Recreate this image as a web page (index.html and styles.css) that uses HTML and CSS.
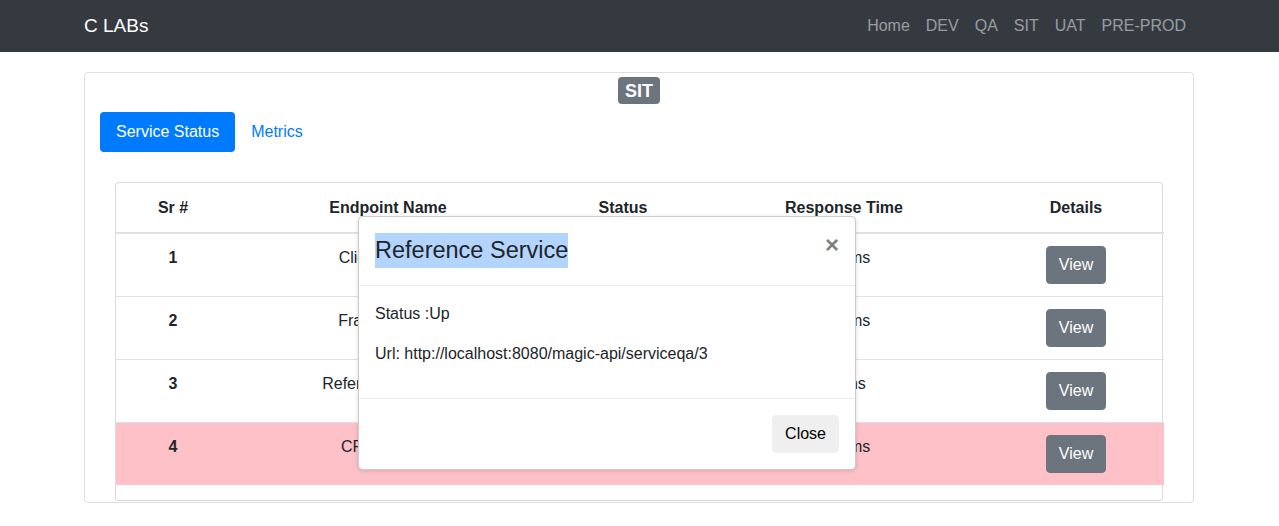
FILE: index.html
```html
<!DOCTYPE html>
<html lang="en">
<head>
<meta charset="utf-8">
<title>C LABs</title>
<link rel="stylesheet" href="styles.css">
</head>
<body>
<nav class="navbar">
  <div class="container nav-inner">
    <a class="brand" href="#">C LABs</a>
    <ul class="nav-links">
      <li><a href="#">Home</a></li>
      <li><a href="#">DEV</a></li>
      <li><a href="#">QA</a></li>
      <li><a href="#">SIT</a></li>
      <li><a href="#">UAT</a></li>
      <li><a href="#">PRE-PROD</a></li>
    </ul>
  </div>
</nav>
<main class="container">
  <div class="card">
    <div class="env-title"><span class="badge">SIT</span></div>
    <div class="pills">
      <a class="pill active" href="#">Service Status</a>
      <a class="pill" href="#">Metrics</a>
    </div>
    <div class="table-wrap">
      <table class="status-table">
        <thead>
          <tr>
            <th class="c1">Sr #</th>
            <th class="c2">Endpoint Name</th>
            <th class="c3">Status</th>
            <th class="c4">Response Time</th>
            <th class="c5">Details</th>
          </tr>
        </thead>
        <tbody>
          <tr>
            <th>1</th><td>Client Service</td><td>Up</td><td>123 ms</td><td><button class="btn-view">View</button></td>
          </tr>
          <tr>
            <th>2</th><td>Fraud Service</td><td>Up</td><td>145 ms</td><td><button class="btn-view">View</button></td>
          </tr>
          <tr>
            <th>3</th><td>Reference Service</td><td>Up</td><td>98 ms</td><td><button class="btn-view">View</button></td>
          </tr>
          <tr class="row-danger">
            <th>4</th><td>CRM Service</td><td>Down</td><td>510 ms</td><td><button class="btn-view">View</button></td>
          </tr>
        </tbody>
      </table>
    </div>
  </div>
</main>
<div class="modal">
  <div class="modal-header">
    <h4 class="modal-title"><span class="sel">Reference Service</span></h4>
    <button class="close" aria-label="Close">×</button>
  </div>
  <div class="modal-body">
    <p>Status :Up</p>
    <p>Url: http://localhost:8080/magic-api/serviceqa/3</p>
  </div>
  <div class="modal-footer">
    <button class="btn-close">Close</button>
  </div>
</div>
</body>
</html>
```
FILE: styles.css
```css
* { box-sizing: border-box; }
html, body {
  margin: 0;
  padding: 0;
  font-family: "Liberation Sans", Arial, sans-serif;
  font-size: 16px;
  line-height: 1.5;
  color: #212529;
  background: #fff;
}
.container {
  max-width: 1140px;
  margin: 0 auto;
  padding: 0 15.5px 0 14.5px;
}
.navbar {
  background: #343a40;
  height: 52px;
}
.nav-inner {
  height: 52px;
  display: flex;
  align-items: center;
  justify-content: space-between;
}
.brand {
  color: #fff;
  font-size: 19px;
  text-decoration: none;
  line-height: 30px;
}
.nav-links {
  display: flex;
  list-style: none;
  margin: 0;
  padding: 0;
}
.nav-links a {
  display: block;
  padding: 8px 8px;
  color: rgba(255,255,255,.5);
  text-decoration: none;
  line-height: 24px;
}
.card {
  margin-top: 20px;
  border: 1px solid rgba(0,0,0,.125);
  border-radius: 4px;
  padding: 4px 15px 1px;
}
.env-title {
  display: flex;
  justify-content: center;
  margin-bottom: 8px;
}
.badge {
  display: inline-block;
  background: #6c757d;
  color: #fff;
  font-weight: 700;
  font-size: 18px;
  line-height: 1;
  padding: 4.5px 7.2px;
  border-radius: 4px;
}
.pills {
  display: flex;
  margin-bottom: 30px;
}
.pill {
  display: block;
  padding: 8px 16px;
  line-height: 24px;
  color: #007bff;
  text-decoration: none;
  border-radius: 4px;
}
.pill.active {
  background: #007bff;
  color: #fff;
}
.table-wrap {
  margin: 0 15px;
  border: 1px solid #dcdcdc;
  border-bottom-color: #d6d6d6;
  border-radius: 4px;
  padding-bottom: 15px;
}
.status-table {
  width: 100%;
  border-collapse: collapse;
  table-layout: fixed;
}
.status-table th, .status-table td {
  padding: 13px 12px 12px;
  text-align: center;
  vertical-align: top;
  line-height: 24px;
}
.status-table thead th {
  border-bottom: 2px solid #dee2e6;
  font-weight: 700;
}
.status-table tbody td, .status-table tbody th { padding-top: 12px; }
.status-table tbody tr { border-top: 1px solid #dee2e6; }
.status-table tbody tr:first-child { border-top: 0; }
.status-table tbody th { font-weight: 700; }
.c1 { width: 114px; }
.c2 { width: 316px; }
.c3 { width: 154px; }
.c4 { width: 288px; }
.c5 { width: 176px; }
.row-danger { background: #fdc1c7; }
.btn-view {
  font-family: inherit;
  font-size: 16px;
  line-height: 24px;
  padding: 6px 12px;
  color: #fff;
  background: #6c757d;
  border: 1px solid #6c757d;
  border-radius: 4px;
}
.modal {
  position: absolute;
  left: 358px;
  top: 216px;
  width: 498px;
  background: #fff;
  border: 1px solid rgba(0,0,0,.2);
  border-radius: 5px;
  box-shadow: 0 1px 4px rgba(0,0,0,.15);
}
.modal-header {
  display: flex;
  align-items: flex-start;
  justify-content: space-between;
  padding: 16px;
  border-bottom: 1px solid #e9ecef;
}
.modal-title {
  margin: 0;
  font-size: 23.5px;
  font-weight: 400;
  line-height: 36px;
  height: 36px;
}
.sel {
  display: inline-block;
  background: #b3d4fc;
  line-height: 35px;
  vertical-align: top;
}
.close {
  padding: 16px;
  margin: -16px -16px -16px auto;
  background: transparent;
  border: 0;
  font-family: inherit;
  font-size: 24px;
  font-weight: 700;
  line-height: 1;
  color: #000;
  opacity: .5;
  text-shadow: 0 1px 0 #fff;
}
.modal-body { padding: 16px; }
.modal-body p { margin: 0 0 16px; }
.modal-footer {
  display: flex;
  justify-content: flex-end;
  padding: 12px;
  border-top: 1px solid #e9ecef;
}
.btn-close {
  margin: 4px;
  font-family: inherit;
  font-size: 16px;
  line-height: 24px;
  padding: 6px 12px;
  color: #000;
  background: #efefef;
  border: 1px solid #efefef;
  border-radius: 4px;
}
```
